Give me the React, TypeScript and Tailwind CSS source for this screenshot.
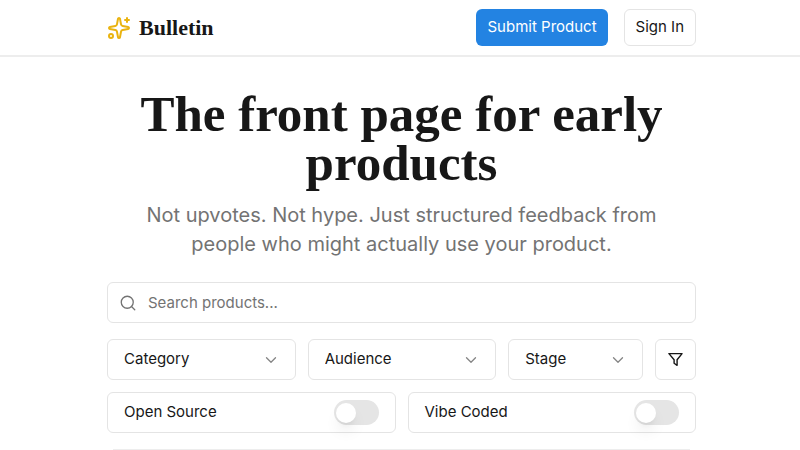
import React, { useState } from "react";
import { ChevronDown, Search } from "lucide-react";

const categories = ["Developer Tools", "Productivity", "Design"];
const audiences = ["Developers", "Founders", "Students"];
const stages = ["Idea", "Beta", "Launched"];

type FilterSelectProps = {
  label: string;
  options: string[];
};

const FilterSelect: React.FC<FilterSelectProps> = ({ label, options }) => {
  const [value, setValue] = useState("");

  return (
    <div className="relative">
      <select
        aria-label={label}
        value={value}
        onChange={(e) => setValue(e.target.value)}
        className="h-[41px] w-full appearance-none rounded-md border border-[#e4e4e4] bg-white pl-4 pr-10 text-[15px] text-[#171717]"
      >
        <option value="">{label}</option>
        {options.map((option) => (
          <option key={option} value={option}>
            {option}
          </option>
        ))}
      </select>
      <ChevronDown
        strokeWidth={1.75}
        className="pointer-events-none absolute right-4 top-3 size-[18px] text-[#858585]"
      />
    </div>
  );
};

type ToggleFieldProps = {
  label: string;
  name: string;
};

const ToggleField: React.FC<ToggleFieldProps> = ({ label, name }) => (
  <div className="flex h-[41px] items-center justify-between rounded-md border border-[#e4e4e4] bg-white px-4">
    <label htmlFor={name} className="text-[15px] text-[#171717]">
      {label}
    </label>
    <input
      id={name}
      name={name}
      type="checkbox"
      role="switch"
      className="flex h-[25px] w-[45px] appearance-none items-center rounded-full bg-[#e5e5e5] p-[2px] before:size-5 before:rounded-full before:bg-white before:shadow-lg before:content-[''] checked:bg-[#2383e2] checked:before:ml-5"
    />
  </div>
);

const LogoIcon = () => (
  <svg
    viewBox="0 0 24 24"
    fill="none"
    stroke="#eab30f"
    strokeWidth="2"
    strokeLinecap="round"
    strokeLinejoin="round"
    className="size-6"
    aria-hidden="true"
  >
    <path d="M11.02 2.81a1 1 0 0 1 1.96 0l1.05 5.56a2 2 0 0 0 1.6 1.6l5.56 1.05a1 1 0 0 1 0 1.96l-5.56 1.05a2 2 0 0 0-1.6 1.6l-1.05 5.56a1 1 0 0 1-1.96 0l-1.05-5.56a2 2 0 0 0-1.6-1.6l-5.56-1.05a1 1 0 0 1 0-1.96l5.56-1.05a2 2 0 0 0 1.6-1.6z" />
    <path d="M20 2v4M22 4h-4" />
    <circle cx="4" cy="20" r="2" />
  </svg>
);

const App: React.FC = () => {
  const [query, setQuery] = useState("");

  return (
    <div className="bg-white font-['Inter','Liberation_Sans',sans-serif] text-[#171717]">
      <header className="border-b-2 border-[#ededed] pl-[3px]">
        <div className="mx-auto flex h-[55px] max-w-[589px] items-center justify-between">
          <a href="/" className="flex items-center gap-2">
            <LogoIcon />
            <span className="font-['Liberation_Serif',serif] text-[22px] font-bold">
              Bulletin
            </span>
          </a>
          <nav className="flex gap-4 text-[15px]">
            <button
              type="button"
              className="h-[37px] rounded-md bg-[#2383e2] px-[11px] text-white"
            >
              Submit Product
            </button>
            <button
              type="button"
              className="h-[37px] rounded-md border border-[#e4e4e4] px-[11px]"
            >
              Sign In
            </button>
          </nav>
        </div>
      </header>

      <main className="pl-[3px]">
        <div className="mx-auto max-w-[589px] pt-[33px]">
          <div className="px-6 text-center">
            <h1 className="font-['Liberation_Serif',serif] text-[51px] font-bold leading-[49px]">
              The front page for early products
            </h1>
            <p className="mt-[13px] text-xl leading-[29px] text-[#737373]">
              Not upvotes. Not hype. Just structured feedback from people who
              might actually use your product.
            </p>
          </div>

          <form
            className="mt-[23px] space-y-3"
            onSubmit={(e) => e.preventDefault()}
          >
            <div className="relative mb-4">
              <Search
                strokeWidth={1.75}
                className="absolute left-3 top-3 size-[18px] text-[#737373]"
              />
              <input
                type="search"
                aria-label="Search products"
                placeholder="Search products..."
                value={query}
                onChange={(e) => setQuery(e.target.value)}
                className="h-[41px] w-full rounded-md border border-[#e4e4e4] pl-10 pr-4 text-[15px] placeholder:text-[#737373]"
              />
            </div>

            <div className="grid grid-cols-[7fr_7fr_5fr_41px] gap-3">
              <FilterSelect label="Category" options={categories} />
              <FilterSelect label="Audience" options={audiences} />
              <FilterSelect label="Stage" options={stages} />
              <button
                type="button"
                aria-label="More filters"
                className="flex h-[41px] items-center justify-center rounded-md border border-[#e4e4e4]"
              >
                <svg
                  viewBox="0 0 16 16"
                  fill="none"
                  stroke="currentColor"
                  strokeWidth="1.5"
                  strokeLinejoin="round"
                  className="size-[15px]"
                >
                  <path d="M1 1.7h14L9.7 8.2v6L6.5 12V8.2z" />
                </svg>
              </button>
            </div>

            <div className="grid grid-cols-2 gap-3">
              <ToggleField label="Open Source" name="openSource" />
              <ToggleField label="Vibe Coded" name="vibeCoded" />
            </div>
          </form>

          <hr className="mx-1.5 mt-4 border-[#ededed]" />
        </div>
      </main>
    </div>
  );
};

export default App;
